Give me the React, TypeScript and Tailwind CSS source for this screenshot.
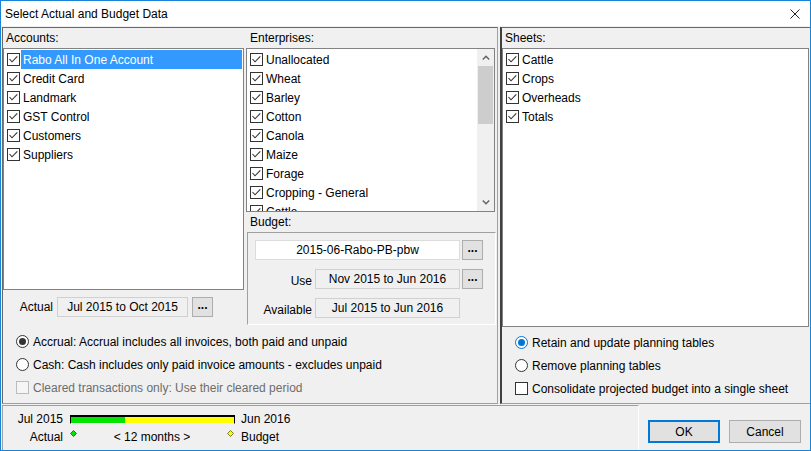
import React from "react";

const Check = ({ checked = true, disabled = false, fill = "none" }: { checked?: boolean; disabled?: boolean; fill?: string }) => (
  <svg width="13" height="13" viewBox="0 0 13 13" className="shrink-0">
    <rect x="0.5" y="0.5" width="12" height="12" fill={fill} stroke={disabled ? "#bcbcbc" : "#333333"} />
    {checked && <path d="M2.5 6 L5 8.8 L10.3 3.3" fill="none" stroke="#333333" strokeWidth="1.1" />}
  </svg>
);

const Radio = ({ checked = false, blue = false }: { checked?: boolean; blue?: boolean }) => (
  <svg width="13" height="13" viewBox="0 0 13 13" className="shrink-0">
    <circle cx="6.5" cy="6.5" r="6" fill="white" stroke={blue ? "#0078d7" : "#333333"} />
    {checked && <circle cx="6.5" cy="6.5" r="3.5" fill={blue ? "#0078d7" : "#333333"} />}
  </svg>
);

const Row = ({ label, selected = false }: { label: string; selected?: boolean }) => (
  <div className="h-[19px] flex items-center pl-[3px] shrink-0">
    <Check />
    <div
      className={
        "ml-[1px] mr-[1px] flex-1 h-full flex items-center pl-[2px] whitespace-nowrap " +
        (selected ? "bg-[#3399ff] text-white" : "text-black")
      }
    >
      {label}
    </div>
  </div>
);

const Dots = () => (
  <div className="w-[21px] h-[20px] shrink-0 bg-[#e1e1e1] border border-[#adadad] flex items-center justify-center font-bold leading-none pb-[5px] text-[12px]">
    ...
  </div>
);

export default function App() {
  const accounts = ["Rabo All In One Account", "Credit Card", "Landmark", "GST Control", "Customers", "Suppliers"];
  const enterprises = ["Unallocated", "Wheat", "Barley", "Cotton", "Canola", "Maize", "Forage", "Cropping - General", "Cattle"];
  const sheets = ["Cattle", "Crops", "Overheads", "Totals"];

  return (
    <div className="w-[811px] h-[451px] bg-[#f0f0f0] border border-[#1883d7] flex flex-col overflow-hidden font-['Liberation_Sans',Arial,sans-serif] text-[12px] text-black leading-none">
      {/* Title bar */}
      <div className="h-[25px] shrink-0 bg-white flex items-center justify-between pl-[4px] pr-[10px]">
        <span>Select Actual and Budget Data</span>
        <svg width="10" height="10" viewBox="0 0 10 10">
          <path d="M0.5 0.5 L9.5 9.5 M9.5 0.5 L0.5 9.5" stroke="#222" strokeWidth="1" />
        </svg>
      </div>

      {/* Main area */}
      <div className="h-[378px] shrink-0 flex">
        {/* Left block */}
        <div className="ml-[1px] mt-[1px] w-[496px] h-[377px] border-t border-l border-t-[#696969] border-l-[#696969] border-r border-b border-r-[#a0a0a0] border-b-[#a0a0a0] flex flex-col">
          <div className="h-[298px] flex shrink-0">
            {/* Accounts column */}
            <div className="w-[241px] flex flex-col shrink-0">
              <div className="h-[20px] flex items-center pl-[3px]">Accounts:</div>
              <div className="h-[242px] w-[241px] bg-white border border-[#828282] pt-[1px] flex flex-col overflow-hidden">
                {accounts.map((a, i) => (
                  <Row key={a} label={a} selected={i === 0} />
                ))}
              </div>
              <div className="mt-[7px] h-[20px] flex items-center">
                <div className="w-[50px] text-right">Actual</div>
                <div className="ml-[4px] w-[131px] h-[20px] border border-[#d0d0d0] bg-[#f0f0f0] flex items-center justify-center">
                  Jul 2015 to Oct 2015
                </div>
                <div className="ml-[4px]">
                  <Dots />
                </div>
              </div>
            </div>

            {/* Enterprises column */}
            <div className="w-[253px] flex flex-col shrink-0">
              <div className="h-[20px] flex items-center pl-[6px]">Enterprises:</div>
              <div className="ml-[2px] h-[164px] w-[249px] bg-white border border-[#828282] flex overflow-hidden">
                <div className="flex-1 pt-[1px] flex flex-col overflow-hidden">
                  {enterprises.map((e) => (
                    <Row key={e} label={e} />
                  ))}
                </div>
                <div className="w-[17px] h-full bg-[#f0f0f0] flex flex-col items-center shrink-0">
                  <div className="h-[17px] w-full flex items-center justify-center">
                    <svg width="8" height="5" viewBox="0 0 8 5">
                      <path d="M0.8 4.5 L4 1.2 L7.2 4.5" fill="none" stroke="#606060" strokeWidth="1.4" />
                    </svg>
                  </div>
                  <div className="w-[15px] h-[58px] bg-[#cdcdcd]" />
                  <div className="flex-1" />
                  <div className="h-[17px] w-full flex items-center justify-center">
                    <svg width="8" height="5" viewBox="0 0 8 5">
                      <path d="M0.8 0.5 L4 3.8 L7.2 0.5" fill="none" stroke="#606060" strokeWidth="1.4" />
                    </svg>
                  </div>
                </div>
              </div>
              <div className="h-[20px] flex items-center pl-[6px]">Budget:</div>
              <div className="ml-[3px] w-[249px] h-[93px] border-t border-l border-t-[#a0a0a0] border-l-[#a0a0a0] border-r border-b border-r-white border-b-white pl-[7px] pt-[7px] flex flex-col">
                <div className="flex items-center h-[20px]">
                  <div className="w-[205px] h-[20px] bg-white border border-[#dcdcdc] flex items-center justify-center">
                    2015-06-Rabo-PB-pbw
                  </div>
                  <div className="ml-[2px]">
                    <Dots />
                  </div>
                </div>
                <div className="mt-[9px] flex items-center h-[20px] -ml-[7px]">
                  <div className="w-[64px] text-right pt-[4px]">Use</div>
                  <div className="ml-[3px] w-[145px] h-[20px] border border-[#d0d0d0] bg-[#f0f0f0] flex items-center justify-center">
                    Nov 2015 to Jun 2016
                  </div>
                  <div className="ml-[2px]">
                    <Dots />
                  </div>
                </div>
                <div className="mt-[9px] flex items-center h-[20px] -ml-[7px]">
                  <div className="w-[64px] text-right pt-[4px]">Available</div>
                  <div className="ml-[3px] w-[145px] h-[20px] border border-[#d0d0d0] bg-[#f0f0f0] flex items-center justify-center">
                    Jul 2015 to Jun 2016
                  </div>
                </div>
              </div>
            </div>
          </div>

          {/* Left radios */}
          <div className="pt-[4px] pl-[13px] flex flex-col">
            <div className="h-[23px] flex items-center gap-[4px]">
              <Radio checked />
              <span>Accrual: Accrual includes all invoices, both paid and unpaid</span>
            </div>
            <div className="h-[23px] flex items-center gap-[4px]">
              <Radio />
              <span>Cash: Cash includes only paid invoice amounts - excludes unpaid</span>
            </div>
            <div className="h-[23px] flex items-center gap-[4px]">
              <Check checked={false} disabled fill="#f5f5f5" />
              <span className="text-[#6d6d6d]">Cleared transactions only: Use their cleared period</span>
            </div>
          </div>
        </div>

        {/* Right block */}
        <div className="ml-[2px] mt-[1px] w-[310px] h-[377px] border-t border-t-[#696969] border-l-2 border-l-[#404040] border-b border-b-[#a0a0a0] flex flex-col">
          <div className="h-[20px] flex items-center pl-[3px]">Sheets:</div>
          <div className="h-[279px] w-[307px] bg-white border border-[#828282] pt-[1px] flex flex-col overflow-hidden">
            {sheets.map((s) => (
              <Row key={s} label={s} />
            ))}
          </div>
          <div className="pt-[4px] pl-[13px] flex flex-col">
            <div className="h-[23px] flex items-center gap-[4px]">
              <Radio checked blue />
              <span>Retain and update planning tables</span>
            </div>
            <div className="h-[23px] flex items-center gap-[4px]">
              <Radio />
              <span>Remove planning tables</span>
            </div>
            <div className="h-[23px] flex items-center gap-[4px]">
              <Check checked={false} fill="white" />
              <span>Consolidate projected budget into a single sheet</span>
            </div>
          </div>
        </div>
      </div>

      {/* Bottom row */}
      <div className="flex-1 flex">
        <div className="ml-[1px] mt-[1px] w-[637px] border-t border-l border-t-[#a0a0a0] border-l-[#a0a0a0] border-r border-r-white pt-[4px] flex flex-col">
          <div className="h-[18px] flex items-center">
            <div className="w-[60px] text-right">Jul 2015</div>
            <div className="ml-[7px] w-[165px] h-[9px] border-t-2 border-l border-r border-black border-b border-b-white flex">
              <div className="w-[54px] h-full bg-[#00e600]" />
              <div className="flex-1 h-full bg-[#ffff00]" />
            </div>
            <div className="ml-[6px]">Jun 2016</div>
          </div>
          <div className="h-[18px] flex items-center">
            <div className="w-[60px] text-right">Actual</div>
            <div className="ml-[7px] w-[165px] h-full flex justify-between items-start">
              <svg width="7" height="7" viewBox="0 0 7 7" className="mt-[2px]">
                <polygon points="3.5,0.5 6.5,3.5 3.5,6.5 0.5,3.5" fill="#00e600" stroke="#1a5a1a" strokeWidth="0.8" />
              </svg>
              <span className="self-center">&lt; 12 months &gt;</span>
              <svg width="7" height="7" viewBox="0 0 7 7" className="mt-[2px] mr-[1px]">
                <polygon points="3.5,0.5 6.5,3.5 3.5,6.5 0.5,3.5" fill="#ffff00" stroke="#5a5a1a" strokeWidth="0.8" />
              </svg>
            </div>
            <div className="ml-[6px]">Budget</div>
          </div>
        </div>
        <div className="pt-[16px] flex">
          <div className="ml-[9px] w-[72px] h-[23px] bg-[#e1e1e1] border-2 border-[#0078d7] flex items-center justify-center">
            OK
          </div>
          <div className="ml-[9px] w-[72px] h-[23px] bg-[#e1e1e1] border border-[#adadad] flex items-center justify-center">
            Cancel
          </div>
        </div>
      </div>
    </div>
  );
}
